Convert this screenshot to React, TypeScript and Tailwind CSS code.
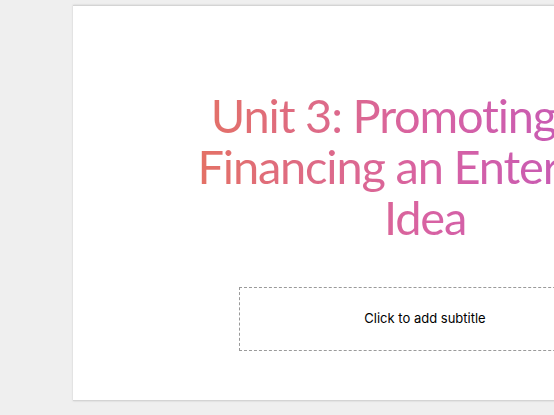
export default function App() {
  return (
    <div className="h-[415px] w-[554px] overflow-hidden bg-[#efefef] pl-[73px] pt-[5px]">
      <div className="relative h-[396px] w-[704px] border-t border-b border-[#d4d4d4] bg-white shadow-[0_0_2px_rgba(0,0,0,0.15)]">
        <div className="flex flex-col items-center pt-[84px]">
          <h1
            className="w-[600px] bg-gradient-to-r from-[#e8744a] via-[#d862a2] to-[#b64fc6] bg-clip-text text-center text-[47px] leading-[51px] tracking-[-1.2px] text-transparent"
            style={{ fontFamily: "Lato, 'Noto Sans', sans-serif" }}
          >
            Unit 3: Promoting and
            <br />
            Financing an Enterprise
            <br />
            Idea
          </h1>
          <div className="mt-[44px] flex h-[64px] w-[372px] items-center justify-center border border-dashed border-[#9a9a9a]">
            <span className="text-[13px] text-black" style={{ fontFamily: "Inter, sans-serif" }}>
              Click to add subtitle
            </span>
          </div>
        </div>
      </div>
    </div>
  )
}
